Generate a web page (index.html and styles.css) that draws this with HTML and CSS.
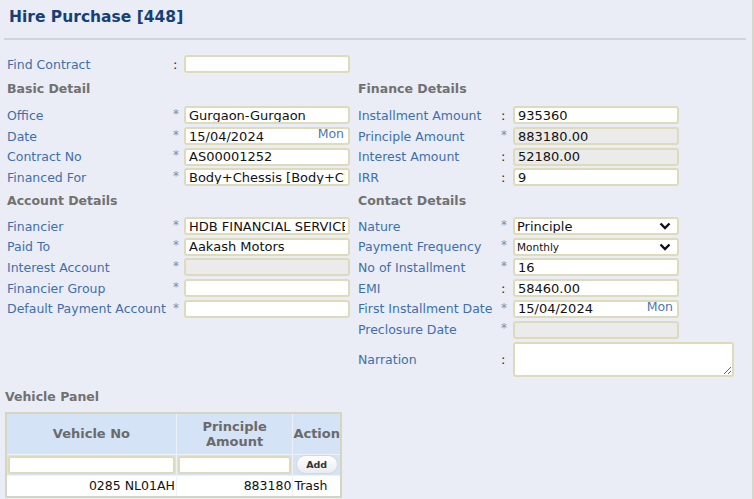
FILE: index.html
```html
<!DOCTYPE html>
<html lang="en">
  <head>
    <meta charset="UTF-8" />
    <meta name="viewport" content="width=device-width, initial-scale=1.0" />
    <title>Hire Purchase</title>
    <link rel="stylesheet" href="styles.css">
  </head>
  <body>
    <div class="page">
      <h1 class="title">Hire Purchase [448]</h1>
      <div class="rule"></div>

      <div class="row find">
        <label>Find Contract</label>
        <span class="mark colon">:</span>
        <input class="field" type="text" />
      </div>

      <div class="form">
        <div class="col left">
          <div class="section">Basic Detail</div>
          <div class="row">
            <label>Office</label><span class="mark">*</span>
            <input class="field" type="text" value="Gurgaon-Gurgaon" />
          </div>
          <div class="row">
            <label>Date</label><span class="mark">*</span>
            <div class="date">
              <input class="field" type="text" value="15/04/2024" />
              <span class="day">Mon</span>
            </div>
          </div>
          <div class="row">
            <label>Contract No</label><span class="mark">*</span>
            <input class="field" type="text" value="AS00001252" />
          </div>
          <div class="row">
            <label>Financed For</label><span class="mark">*</span>
            <input class="field" type="text" value="Body+Chessis [Body+Chessis]" />
          </div>

          <div class="section">Account Details</div>
          <div class="row">
            <label>Financier</label><span class="mark">*</span>
            <input class="field" type="text" value="HDB FINANCIAL SERVICES LTD" />
          </div>
          <div class="row">
            <label>Paid To</label><span class="mark">*</span>
            <input class="field" type="text" value="Aakash Motors" />
          </div>
          <div class="row">
            <label>Interest Account</label><span class="mark">*</span>
            <input class="field" type="text" disabled />
          </div>
          <div class="row">
            <label>Financier Group</label><span class="mark">*</span>
            <input class="field" type="text" />
          </div>
          <div class="row">
            <label>Default Payment Account</label><span class="mark">*</span>
            <input class="field" type="text" />
          </div>
        </div>

        <div class="col right">
          <div class="section">Finance Details</div>
          <div class="row">
            <label>Installment Amount</label><span class="mark colon">:</span>
            <input class="field" type="text" value="935360" />
          </div>
          <div class="row">
            <label>Principle Amount</label><span class="mark">*</span>
            <input class="field" type="text" value="883180.00" disabled />
          </div>
          <div class="row">
            <label>Interest Amount</label><span class="mark colon">:</span>
            <input class="field" type="text" value="52180.00" disabled />
          </div>
          <div class="row">
            <label>IRR</label><span class="mark colon">:</span>
            <input class="field" type="text" value="9" />
          </div>

          <div class="section">Contact Details</div>
          <div class="row">
            <label>Nature</label><span class="mark">*</span>
            <select class="field select">
              <option>Principle</option>
            </select>
          </div>
          <div class="row">
            <label>Payment Frequency</label><span class="mark">*</span>
            <select class="field select small">
              <option>Monthly</option>
            </select>
          </div>
          <div class="row">
            <label>No of Installment</label><span class="mark">*</span>
            <input class="field" type="text" value="16" />
          </div>
          <div class="row">
            <label>EMI</label><span class="mark colon">:</span>
            <input class="field" type="text" value="58460.00" />
          </div>
          <div class="row">
            <label>First Installment Date</label><span class="mark">*</span>
            <div class="date">
              <input class="field" type="text" value="15/04/2024" />
              <span class="day">Mon</span>
            </div>
          </div>
          <div class="row">
            <label>Preclosure Date</label><span class="mark">*</span>
            <input class="field" type="text" disabled />
          </div>
          <div class="row narration">
            <label>Narration</label><span class="mark colon">:</span>
            <textarea class="field"></textarea>
          </div>
        </div>
      </div>

      <div class="section vehicle-title">Vehicle Panel</div>
      <table class="vehicles">
        <tr class="head">
          <th class="c-no">Vehicle No</th>
          <th class="c-amt">Principle<br />Amount</th>
          <th class="c-act">Action</th>
        </tr>
        <tr class="entry">
          <td><input class="field" type="text" /></td>
          <td><input class="field" type="text" /></td>
          <td><button class="add">Add</button></td>
        </tr>
        <tr class="item">
          <td class="num">0285 NL01AH</td>
          <td class="num">883180</td>
          <td>Trash</td>
        </tr>
      </table>
    </div>
  </body>
</html>
```

FILE: styles.css
```css
body {
  margin: 0;
  background-color: #eaedf5;
  font-family: "DejaVu Sans", Verdana, sans-serif;
  font-size: 12.5px;
}
.page {
  width: 754px;
  height: 499px;
  box-sizing: border-box;
  border-right: 2px solid #d5d8cb;
  overflow: hidden;
}
.title {
  margin: 0;
  padding: 8px 0 0 9px;
  height: 24px;
  font-size: 15.5px;
  color: #163f78;
}
.rule {
  margin: 6px 6px 0 4px;
  height: 2px;
  background-color: #d2d3d6;
}
.form {
  display: grid;
  grid-template-columns: 351px 1fr;
}
.col.left {
  padding-left: 7px;
}
.col.right {
  padding-left: 7px;
}
.row {
  display: grid;
  grid-template-columns: 166px 11px 166px;
  align-items: center;
  height: 20.7px;
}
.right .row {
  grid-template-columns: 143px 12px 166px;
}
.find {
  margin-top: 14px;
  padding-left: 7px;
  height: 20px;
}
label {
  color: #3f6fab;
  white-space: nowrap;
}
.mark {
  color: #8c8c8c;
  align-self: start;
  padding-top: 2px;
  font-size: 12px;
}
.mark.colon {
  color: #1e1e1e;
  font-size: 13px;
  align-self: center;
  padding: 0;
}
.section {
  height: 28px;
  line-height: 26.5px;
  color: #717171;
  font-weight: bold;
}
.left .section:first-child,
.right .section:first-child {
  height: 31px;
  line-height: 30px;
}
.field {
  box-sizing: border-box;
  width: 166px;
  height: 18px;
  margin: 0;
  padding: 0 3px;
  border: 2px solid #dedbba;
  border-radius: 3px;
  background-color: #fff;
  font-family: "DejaVu Sans", Verdana, sans-serif;
  font-size: 13px;
  color: #111;
  outline: none;
}
.field:disabled {
  background-color: #ebebeb;
  color: #111;
}
.date {
  position: relative;
  width: 166px;
  height: 18px;
}
.day {
  position: absolute;
  right: 6px;
  top: -1px;
  color: #4d78b0;
  font-size: 12.5px;
}
.select {
  appearance: none;
  -webkit-appearance: none;
  padding-left: 2px;
  background-image: url("data:image/svg+xml,%3Csvg xmlns='http://www.w3.org/2000/svg' width='12' height='8' viewBox='0 0 12 8'%3E%3Cpath d='M1.5 1.5 L6 6 L10.5 1.5' fill='none' stroke='%23111' stroke-width='2.4'/%3E%3C/svg%3E");
  background-repeat: no-repeat;
  background-position: right 6px center;
}
.select.small {
  font-size: 10.5px;
}
.row.narration {
  height: 38px;
  margin-top: 1px;
}
.narration textarea {
  width: 221px;
  height: 35px;
  resize: both;
}
.vehicle-title {
  margin: 5px 0 0 5px;
  height: 26px;
  line-height: 26px;
}
.vehicles {
  margin: 2px 0 0 5px;
  border-collapse: collapse;
  border: 2px solid #d6d6bf;
  width: 337px;
}
.vehicles td,
.vehicles th {
  padding: 0;
  border: 1px solid #eef2f8;
}
.vehicles .head th {
  height: 40px;
  background-color: #d5e3f6;
  color: #6a6a6a;
  font-size: 13px;
  font-weight: bold;
  line-height: 15px;
}
.c-no {
  width: 170px;
}
.c-amt {
  width: 116px;
}
.entry td {
  height: 20px;
  background-color: #d5e3f6;
  padding: 0 1px;
}
.entry .field {
  width: 100%;
  height: 18px;
}
.add {
  display: block;
  margin: 0 auto;
  width: 42px;
  height: 19px;
  padding: 0;
  border: 1px solid #d3d7de;
  border-radius: 10px;
  background: linear-gradient(#ffffff, #e9ebef);
  font-family: "DejaVu Sans", Verdana, sans-serif;
  font-size: 9.5px;
  font-weight: bold;
  color: #333;
}
.item td {
  height: 20px;
  background-color: #fff;
  color: #111;
  font-size: 12.5px;
  padding: 0 1px;
}
.item td.num {
  text-align: right;
}
```
